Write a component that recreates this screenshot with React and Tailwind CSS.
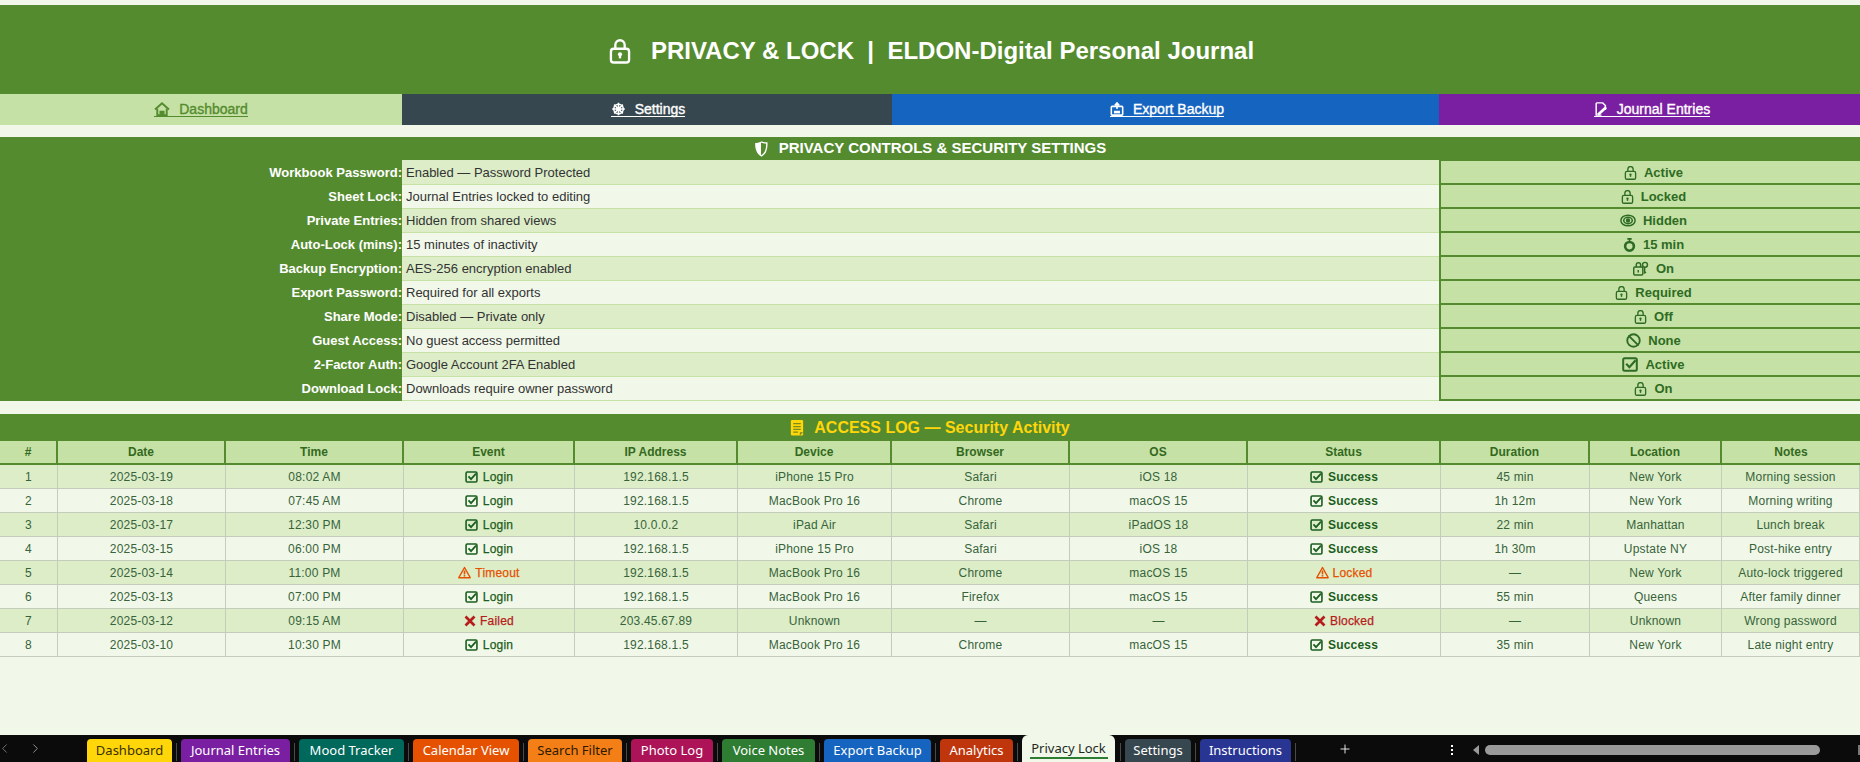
import { Ban, ChevronLeft, ChevronRight, Plus } from 'lucide-react'

const sans = "font-['Liberation_Sans',Arial,sans-serif]"

function LockIcon({ className }) {
    return (
        <svg viewBox="0 0 16 18" fill="none" stroke="currentColor" strokeWidth="1.7" className={className}>
            <path d="M4.6 7V4.2a3.4 3.4 0 0 1 6.8 0V7" />
            <rect x="1.4" y="7" width="13.2" height="10" rx="2" />
            <circle cx="8" cy="11" r="1.5" fill="currentColor" stroke="none" />
            <path d="M8 11v3" />
        </svg>
    )
}

function LockKeyIcon({ className }) {
    return (
        <svg viewBox="0 0 22 20" fill="none" stroke="currentColor" strokeWidth="2" className={className}>
            <path d="M4.5 8V5a3 3 0 0 1 6 0v3" />
            <rect x="1" y="8" width="12.5" height="10.8" rx="1.6" />
            <path d="M7.2 12v3.4" />
            <circle cx="16.5" cy="5" r="3.4" />
            <path d="M16 8.5v7.5l2-1" />
        </svg>
    )
}

function CheckBoxIcon({ className }) {
    return (
        <svg viewBox="0 0 16 15" fill="none" stroke="currentColor" className={className}>
            <rect x="1.2" y="1.2" width="13.6" height="12.6" rx="1.5" strokeWidth="2" />
            <path d="M4.2 6.8l3.2 3.4 6.2-7" strokeWidth="2.2" />
        </svg>
    )
}

function WarnIcon({ className }) {
    return (
        <svg viewBox="0 0 16 16" fill="none" stroke="currentColor" className={className}>
            <path d="M8 1.8L15 14.4H1z" strokeWidth="1.7" strokeLinejoin="round" />
            <path d="M8 5.6v4.8" strokeWidth="2" />
            <path d="M8 11.2v1.8" strokeWidth="2" />
        </svg>
    )
}

function CrossIcon({ className }) {
    return (
        <svg viewBox="0 0 16 16" fill="none" stroke="currentColor" strokeWidth="3.6" className={className}>
            <path d="M2 2l12 12M14 2L2 14" />
        </svg>
    )
}

function EyeIcon({ className }) {
    return (
        <svg viewBox="0 0 18 14" fill="none" stroke="currentColor" strokeWidth="1.7" className={className}>
            <ellipse cx="9" cy="7" rx="8" ry="6" />
            <ellipse cx="9" cy="7" rx="4.8" ry="3.6" />
            <circle cx="9" cy="7" r="1.6" fill="currentColor" />
        </svg>
    )
}

function TimerIcon({ className }) {
    return (
        <svg viewBox="0 0 14 16" fill="none" stroke="currentColor" className={className}>
            <path d="M4.5 1h5M7 1v3" strokeWidth="1.8" />
            <circle cx="7" cy="9.5" r="5" strokeWidth="3" />
            <path d="M6.4 10l3-2.6" strokeWidth="1.4" stroke="#c5e1a5" />
        </svg>
    )
}

function ShieldIcon({ className }) {
    return (
        <svg viewBox="0 0 14 16" className={className}>
            <path d="M7 .8C4.8 1.6 3 2 1.2 2c-.3 5.600 1.400 10.800 5.800 13.200z" fill="currentColor" />
            <path d="M7 .8c2.200.8 4 1.200 5.800 1.200.3 5.600-1.400 10.800-5.800 13.200" fill="none" stroke="currentColor" strokeWidth="1.4" />
        </svg>
    )
}

function HouseIcon({ className }) {
    return (
        <svg viewBox="0 0 18 16" fill="none" stroke="currentColor" strokeWidth="2.2" className={className}>
            <path d="M1 8.600L9 1.600l8 7" />
            <path d="M3.600 7.600V15h10.800V7.600" />
            <path d="M6.800 15v-4.200h4.400V15" fill="currentColor" strokeWidth="1.4" />
        </svg>
    )
}

function WheelIcon({ className }) {
    return (
        <svg viewBox="0 0 16 16" fill="none" stroke="currentColor" strokeWidth="1.8" className={className}>
            <circle cx="8" cy="8" r="5.400" />
            <circle cx="8" cy="8" r="1.800" fill="currentColor" />
            <path d="M8 .8v14.400M.8 8h14.400M3 3l10 10M13 3L3 13" />
        </svg>
    )
}

function InboxIcon({ className }) {
    return (
        <svg viewBox="0 0 16 16" fill="none" stroke="currentColor" strokeWidth="1.800" className={className}>
            <rect x="1.500" y="5" width="13" height="10" rx="1" />
            <path d="M4.500 11.500h7" strokeWidth="3" />
            <path d="M8 .8V8M5.400 4L8 1l2.600 3" />
        </svg>
    )
}

function PencilDocIcon({ className }) {
    return (
        <svg viewBox="0 0 16 16" fill="none" stroke="currentColor" strokeWidth="1.700" className={className}>
            <path d="M2.500 1h7.500l3 3v5M2.500 1v14h6" />
            <path d="M4.500 14.500L13.800 6" strokeWidth="3" />
        </svg>
    )
}

function ClipboardIcon({ className }) {
    return (
        <svg viewBox="0 0 14 18" className={className}>
            <rect x="0.500" y="1" width="13" height="16.500" rx="1.400" fill="currentColor" />
            <path d="M3 5h8M3 8h8M3 11h8M3 14h5" stroke="#7a8a1f" strokeWidth="1.300" />
            <path d="M10 17.500l3.500-3.500h-3.500z" fill="#7a8a1f" />
        </svg>
    )
}

const controls = [
    { label: 'Workbook Password:', value: 'Enabled — Password Protected', status: 'Active', icon: 'lock' },
    { label: 'Sheet Lock:', value: 'Journal Entries locked to editing', status: 'Locked', icon: 'lock' },
    { label: 'Private Entries:', value: 'Hidden from shared views', status: 'Hidden', icon: 'eye' },
    { label: 'Auto-Lock (mins):', value: '15 minutes of inactivity', status: '15 min', icon: 'timer' },
    { label: 'Backup Encryption:', value: 'AES-256 encryption enabled', status: 'On', icon: 'key' },
    { label: 'Export Password:', value: 'Required for all exports', status: 'Required', icon: 'lock' },
    { label: 'Share Mode:', value: 'Disabled — Private only', status: 'Off', icon: 'lock' },
    { label: 'Guest Access:', value: 'No guest access permitted', status: 'None', icon: 'ban' },
    { label: '2-Factor Auth:', value: 'Google Account 2FA Enabled', status: 'Active', icon: 'check' },
    { label: 'Download Lock:', value: 'Downloads require owner password', status: 'On', icon: 'lock' },
]

const columns = ['#', 'Date', 'Time', 'Event', 'IP Address', 'Device', 'Browser', 'OS', 'Status', 'Duration', 'Location', 'Notes']

const logs = [
    ['1', '2025-03-19', '08:02 AM', 'Login', '192.168.1.5', 'iPhone 15 Pro', 'Safari', 'iOS 18', 'Success', '45 min', 'New York', 'Morning session'],
    ['2', '2025-03-18', '07:45 AM', 'Login', '192.168.1.5', 'MacBook Pro 16', 'Chrome', 'macOS 15', 'Success', '1h 12m', 'New York', 'Morning writing'],
    ['3', '2025-03-17', '12:30 PM', 'Login', '10.0.0.2', 'iPad Air', 'Safari', 'iPadOS 18', 'Success', '22 min', 'Manhattan', 'Lunch break'],
    ['4', '2025-03-15', '06:00 PM', 'Login', '192.168.1.5', 'iPhone 15 Pro', 'Safari', 'iOS 18', 'Success', '1h 30m', 'Upstate NY', 'Post-hike entry'],
    ['5', '2025-03-14', '11:00 PM', 'Timeout', '192.168.1.5', 'MacBook Pro 16', 'Chrome', 'macOS 15', 'Locked', '—', 'New York', 'Auto-lock triggered'],
    ['6', '2025-03-13', '07:00 PM', 'Login', '192.168.1.5', 'MacBook Pro 16', 'Firefox', 'macOS 15', 'Success', '55 min', 'Queens', 'After family dinner'],
    ['7', '2025-03-12', '09:15 AM', 'Failed', '203.45.67.89', 'Unknown', '—', '—', 'Blocked', '—', 'Unknown', 'Wrong password'],
    ['8', '2025-03-10', '10:30 PM', 'Login', '192.168.1.5', 'MacBook Pro 16', 'Chrome', 'macOS 15', 'Success', '35 min', 'New York', 'Late night entry'],
]

const tabs = [
    { name: 'Dashboard', cls: 'w-[85px] bg-[#ffd60a] text-[#3a3000]' },
    { name: 'Journal Entries', cls: 'w-[109px] bg-[#7b1fa2] text-white' },
    { name: 'Mood Tracker', cls: 'w-[105px] bg-[#00695c] text-white' },
    { name: 'Calendar View', cls: 'w-[106px] bg-[#e65100] text-white' },
    { name: 'Search Filter', cls: 'w-[94px] bg-[#f57f17] text-[#2b1a00]' },
    { name: 'Photo Log', cls: 'w-[82px] bg-[#ad1457] text-white' },
    { name: 'Voice Notes', cls: 'w-[93px] bg-[#2e7d32] text-white' },
    { name: 'Export Backup', cls: 'w-[107px] bg-[#1565c0] text-white' },
    { name: 'Analytics', cls: 'w-[73px] bg-[#bf360c] text-white' },
]

const tabsAfter = [
    { name: 'Settings', cls: 'w-[66px] bg-[#37474f] text-white' },
    { name: 'Instructions', cls: 'w-[91px] bg-[#283593] text-white' },
]

function ControlIcon({ name }) {
    if (name === 'eye') return <EyeIcon className="w-[16px] h-[13px]" />
    if (name === 'timer') return <TimerIcon className="w-[13px] h-[14px]" />
    if (name === 'key') return <LockKeyIcon className="w-[16px] h-[15px]" />
    if (name === 'ban') return <Ban size={15} strokeWidth={3} />
    if (name === 'check') return <CheckBoxIcon className="w-[16px] h-[15px]" />
    return <LockIcon className="w-[13px] h-[14px]" />
}

function EventCell({ value }) {
    if (value === 'Timeout' || value === 'Locked') {
        return (
            <span className="flex items-center gap-[4px] text-[#e65100] [-webkit-text-stroke:0.25px]">
                <WarnIcon className="w-[13px] h-[13px]" />
                {value}
            </span>
        )
    }
    if (value === 'Failed' || value === 'Blocked') {
        return (
            <span className="flex items-center gap-[4px] text-[#b71c1c] [-webkit-text-stroke:0.25px]">
                <CrossIcon className="w-[12px] h-[12px]" />
                {value}
            </span>
        )
    }
    return (
        <span className={`flex items-center gap-[5px] text-[#1b5e20] ${value === 'Success' ? 'font-bold' : '[-webkit-text-stroke:0.25px]'}`}>
            <CheckBoxIcon className="w-[13px] h-[12px]" />
            {value}
        </span>
    )
}

function Tab({ name, cls }) {
    return (
        <div className="flex items-end">
            <div className={`${cls} h-[23px] rounded-t-[4px] flex items-center justify-center text-[13px] font-['Noto_Sans',sans-serif]`}>
                {name}
            </div>
            <span className="ml-[4px] mr-[4px] mb-[1px] w-px h-[18px] bg-[#4a4a4a]" />
        </div>
    )
}

function NavLink({ cls, width, icon, label }) {
    return (
        <div className={`${width} ${cls} flex items-center justify-center`}>
            <span className="flex items-center gap-[9px] border-b border-current leading-[14px] h-[15px] text-[14px] [-webkit-text-stroke:0.35px]">
                {icon}
                {label}
            </span>
        </div>
    )
}

export default function App() {
    return (
        <div className={`${sans} w-[1860px] h-[762px] overflow-hidden bg-[#f1f8e9] flex flex-col`}>
            <div className="mt-[5px] h-[89px] pt-[3px] pl-[3px] bg-[#558b2f] flex items-center justify-center gap-[20px] text-white text-[24px] font-bold">
                <LockIcon className="w-[22px] h-[25px]" />
                <span className="whitespace-pre">PRIVACY &amp; LOCK  |  ELDON-Digital Personal Journal</span>
            </div>

            <div className="h-[31px] flex">
                <NavLink width="w-[402px]" cls="bg-[#c5e1a5] text-[#558b2f]" icon={<HouseIcon className="w-[16px] h-[14px]" />} label="Dashboard" />
                <NavLink width="w-[490px]" cls="bg-[#37474f] text-white pl-[2px]" icon={<WheelIcon className="w-[15px] h-[14px]" />} label="Settings" />
                <NavLink width="w-[547px]" cls="bg-[#1565c0] text-white pl-[3px]" icon={<InboxIcon className="w-[14px] h-[14px]" />} label="Export Backup" />
                <NavLink width="w-[421px]" cls="bg-[#7b1fa2] text-white pl-[5px]" icon={<PencilDocIcon className="w-[14px] h-[14px]" />} label="Journal Entries" />
            </div>

            <div className="mt-[12px] h-[23px] bg-[#558b2f] text-white text-[15px] font-bold flex items-center justify-center gap-[11px]">
                <ShieldIcon className="w-[14px] h-[16px]" />
                PRIVACY CONTROLS &amp; SECURITY SETTINGS
            </div>

            <div className="flex h-px">
                <div className="w-[402px] bg-[#558b2f]" />
                <div className="w-[1037px] bg-[#dcedc8]" />
                <div className="w-[421px] bg-[#558b2f]" />
            </div>

            <div className="flex flex-col">
                {controls.map((row, i) => (
                    <div key={row.label} className="h-[24px] flex">
                        <div className="w-[402px] bg-[#558b2f] text-white text-[13px] font-bold text-right flex items-center justify-end">
                            {row.label}
                        </div>
                        <div className={`w-[1037px] text-[13px] text-[#333333] pl-[4px] flex items-center border-b border-[#c5e1a5] ${i % 2 === 0 ? 'bg-[#dcedc8]' : 'bg-[#f1f8e9]'}`}>
                            {row.value}
                        </div>
                        <div className="w-[421px] pl-[6px] pt-[1px] bg-[#c5e1a5] text-[#2e6b23] text-[13px] font-bold flex items-center justify-center gap-[7px] border-l-2 border-b-2 border-[#558b2f]">
                            <ControlIcon name={row.icon} />
                            {row.status}
                        </div>
                    </div>
                ))}
            </div>

            <div className="mt-[13px] h-[27px] bg-[#558b2f] text-[#ffd60a] text-[16px] font-bold flex items-center justify-center gap-[10px]">
                <ClipboardIcon className="w-[14px] h-[17px]" />
                ACCESS LOG — Security Activity
            </div>

            <div className="grid grid-cols-[58px_168px_178px_171px_163px_154px_178px_178px_193px_149px_132px_138px]">
                {columns.map((col, i) => (
                    <div key={col} className={`h-[24px] bg-[#c5e1a5] text-[#33691e] text-[12px] font-bold flex items-center justify-center border-b-2 border-[#558b2f] ${i < columns.length - 1 ? 'border-r-2' : ''}`}>
                        {col}
                    </div>
                ))}
                {logs.map((row, r) =>
                    row.map((cell, c) => (
                        <div key={r + '-' + c} className={`h-[24px] text-[12px] text-[#37633a] tracking-[0.2px] flex items-center justify-center border-b border-r border-[#c4ccbb] ${r % 2 === 0 ? 'bg-[#dcedc8]' : 'bg-[#f1f8e9]'}`}>
                            {c === 3 || c === 8 ? <EventCell value={cell} /> : cell}
                        </div>
                    ))
                )}
            </div>

            <div className="mt-auto h-[27px] bg-[#0b0b0b] flex items-end relative">
                <ChevronLeft size={15} strokeWidth={1.5} className="absolute left-[-3px] top-[6px] text-[#777777]" />
                <ChevronRight size={15} strokeWidth={1.5} className="absolute left-[28px] top-[6px] text-[#999999]" />
                <div className="ml-[87px] flex items-end">
                    {tabs.map((tab) => (
                        <Tab key={tab.name} {...tab} />
                    ))}
                    <div className="w-[93px] h-[27px] bg-[#f1f8e9] rounded-t-[6px] text-[#1f2a1f] text-[13px] font-['Noto_Sans',sans-serif] flex flex-col items-center justify-center">
                        <span className="leading-[18px]">Privacy Lock</span>
                        <span className="w-[78px] h-[2px] bg-[#2e7d32]" />
                    </div>
                    <span className="ml-[5px] mr-[4px] mb-[1px] w-px h-[18px] bg-[#4a4a4a]" />
                    {tabsAfter.map((tab) => (
                        <Tab key={tab.name} {...tab} />
                    ))}
                </div>
                <Plus size={14} strokeWidth={1.5} className="absolute left-[1338px] top-[7px] text-white" />
                <span className="absolute left-[1451px] top-[10px] w-[2px] h-[2px] bg-white shadow-[0_4px_0_#fff,0_8px_0_#fff]" />
                <span className="absolute left-[1473px] top-[10px] w-0 h-0 border-y-[5px] border-y-transparent border-r-[6px] border-r-[#999999]" />
                <span className="absolute left-[1485px] top-[10px] w-[335px] h-[10px] rounded-[5px] bg-[#9a9a9a]" />
                <span className="absolute right-0 top-[10px] w-[2px] h-[10px] bg-[#777777]" />
            </div>
        </div>
    )
}
